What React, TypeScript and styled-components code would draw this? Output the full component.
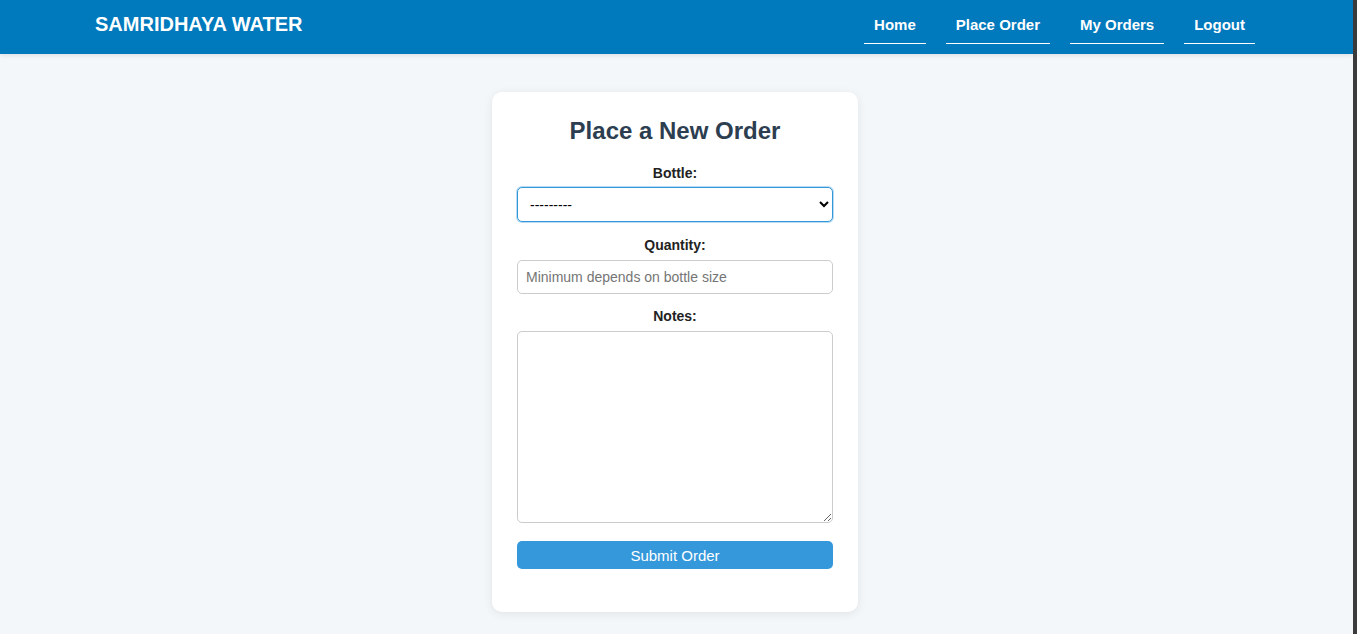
import React from "react";
import styled, { createGlobalStyle } from "styled-components";

const Global = createGlobalStyle`
  html, body { margin: 0; padding: 0; height: 100%; }
  html { background: #3b3b3b; }
  body { font-family: "Liberation Sans", Arial, sans-serif; }
  #root { height: 100%; }
`;

const Page = styled.div`
  width: calc(100% - 4px);
  min-height: 100%;
  background: #f3f7fa;
  display: flex;
  flex-direction: column;
`;

const NavBar = styled.header`
  height: 54px;
  background: #0079bd;
  box-shadow: 0 2px 4px rgba(0, 0, 0, 0.08);
  display: flex;
  align-items: center;
  padding: 0 98px 0 95px;
`;

const Brand = styled.div`
  color: #fff;
  font-weight: 700;
  font-size: 20px;
  flex: 1;
  margin-bottom: 6px;
`;

const Links = styled.nav`
  display: flex;
  gap: 20px;
  margin-bottom: 4px;
`;

const NavLink = styled.a`
  color: #fff;
  font-weight: 700;
  font-size: 15px;
  line-height: 18px;
  padding: 9px 10px 9px;
  border-bottom: 1px solid #fff;
  text-decoration: none;
`;

const Main = styled.main`
  display: flex;
  justify-content: center;
  padding: 38px 3px 0 0;
`;

const Card = styled.form`
  width: 316px;
  background: #fff;
  border-radius: 10px;
  box-shadow: 0 2px 10px rgba(0, 0, 0, 0.08);
  padding: 25px 25px 43px;
  display: flex;
  flex-direction: column;
`;

const Title = styled.h2`
  margin: 0;
  text-align: center;
  font-size: 24px;
  line-height: 28px;
  color: #2c3e50;
`;

const Label = styled.label<{ $top: number }>`
  display: block;
  text-align: center;
  font-weight: 700;
  font-size: 14px;
  line-height: 16px;
  color: #222;
  margin-top: ${(p) => p.$top}px;
  margin-bottom: 6px;
`;

const fieldBase = `
  box-sizing: border-box;
  width: 100%;
  border: 1px solid #ccc;
  border-radius: 5px;
  font-family: "Liberation Sans", Arial, sans-serif;
  font-size: 14px;
  background: #fff;
  outline: none;
`;

const Select = styled.select`
  ${fieldBase}
  height: 35px;
  padding: 0 6px 0 8px;
  border-color: #3498db;
  box-shadow: 0 0 0 1px rgba(52, 152, 219, 0.35);
  color: #000;
`;

const Input = styled.input`
  ${fieldBase}
  height: 34px;
  padding: 0 8px;
  margin-top: 1px;
  &::placeholder { color: #757575; }
`;

const TextArea = styled.textarea`
  ${fieldBase}
  height: 192px;
  padding: 8px;
  margin-top: 1px;
  resize: vertical;
  display: block;
`;

const Submit = styled.button`
  margin-top: 18px;
  height: 28px;
  border: none;
  border-radius: 5px;
  background: #3498db;
  color: #fff;
  font-family: "Liberation Sans", Arial, sans-serif;
  font-size: 15px;
  cursor: pointer;
`;

export default function App() {
  return (
    <>
      <Global />
      <Page>
        <NavBar>
          <Brand>SAMRIDHAYA WATER</Brand>
          <Links>
            <NavLink href="#">Home</NavLink>
            <NavLink href="#">Place Order</NavLink>
            <NavLink href="#">My Orders</NavLink>
            <NavLink href="#">Logout</NavLink>
          </Links>
        </NavBar>
        <Main>
          <Card onSubmit={(e) => e.preventDefault()}>
            <Title>Place a New Order</Title>
            <Label $top={20}>Bottle:</Label>
            <Select defaultValue="">
              <option value="">---------</option>
            </Select>
            <Label $top={15}>Quantity:</Label>
            <Input placeholder="Minimum depends on bottle size" />
            <Label $top={14}>Notes:</Label>
            <TextArea />
            <Submit type="submit">Submit Order</Submit>
          </Card>
        </Main>
      </Page>
    </>
  );
}
